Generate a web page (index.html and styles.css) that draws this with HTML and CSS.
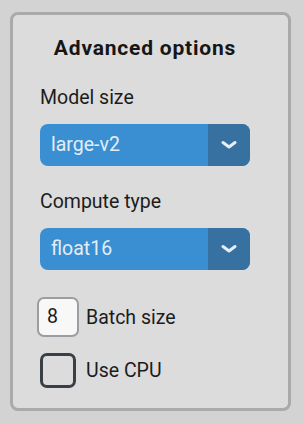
FILE: index.html
```html
<!DOCTYPE html>
<html lang="en">
<head>
    <meta charset="UTF-8">
    <meta name="viewport" content="width=device-width, initial-scale=1.0">
    <title>Advanced options</title>
    <link rel="stylesheet" href="styles.css">
</head>
<body>
    <div class="panel">
        <h2 class="title">Advanced options</h2>

        <!-- model size -->
        <label class="field-label">Model size</label>
        <div class="select">
            <span class="select-value">large-v2</span>
            <span class="select-arrow">
                <svg width="16" height="10" viewBox="0 0 16 10"><path d="M2 2.5 L8 7 L14 2.5" fill="none" stroke="#e6eef6" stroke-width="3" stroke-linecap="round" stroke-linejoin="round"/></svg>
            </span>
        </div>

        <!-- compute type -->
        <label class="field-label">Compute type</label>
        <div class="select">
            <span class="select-value">float16</span>
            <span class="select-arrow">
                <svg width="16" height="10" viewBox="0 0 16 10"><path d="M2 2.5 L8 7 L14 2.5" fill="none" stroke="#e6eef6" stroke-width="3" stroke-linecap="round" stroke-linejoin="round"/></svg>
            </span>
        </div>

        <div class="row batch-row">
            <div class="num-box">8</div>
            <span class="row-text">Batch size</span>
        </div>

        <div class="row cpu-row">
            <div class="check-box"></div>
            <span class="row-text">Use CPU</span>
        </div>
    </div>
</body>
</html>
```

FILE: styles.css
```css
*{
    margin: 0;
    padding: 0;
    box-sizing: border-box;
}
body{
    background-color: #d3d3d3;
    font-family: Roboto, "Liberation Sans", sans-serif;
    color: #1c1c1c;
}
.panel{
    margin: 12px 0 0 10px;
    width: 281px;
    height: 399px;
    border: 3px solid #aaaaaa;
    border-radius: 8px;
    background-color: #dcdcdc;
    padding: 20px 38px 0 27px;
    display: flex;
    flex-direction: column;
}
.title{
    font-size: 21px;
    font-weight: bold;
    letter-spacing: 0.8px;
    text-align: center;
    line-height: 26px;
    color: #161616;
}
.field-label{
    font-size: 19.5px;
    line-height: 24px;
    margin-top: 25px;
}
.select{
    margin-top: 14px;
    height: 42px;
    display: flex;
    border-radius: 8px;
    overflow: hidden;
    background-color: #3a8fd2;
}
.select + .field-label{
    margin-top: 24px;
}
.select-value{
    flex: 1;
    color: #e4edf7;
    font-size: 19.5px;
    line-height: 42px;
    padding-left: 11px;
}
.select-arrow{
    width: 42px;
    background-color: #3671a1;
    display: flex;
    align-items: center;
    justify-content: center;
}
.select-arrow svg{
    display: block;
}
.row{
    display: flex;
    align-items: center;
}
.batch-row{
    margin-top: 27px;
    margin-left: -3px;
}
.num-box{
    width: 42px;
    height: 40px;
    border: 2px solid #9a9da1;
    border-radius: 7px;
    background-color: #f8f8f8;
    font-size: 19.5px;
    line-height: 36px;
    padding-left: 8px;
}
.batch-row .row-text{
    margin-left: 7px;
}
.row-text{
    font-size: 19.5px;
}
.cpu-row{
    margin-top: 16px;
}
.check-box{
    width: 36px;
    height: 35px;
    border: 3px solid #3a3f46;
    border-radius: 7px;
}
.cpu-row .row-text{
    margin-left: 10px;
}
```
